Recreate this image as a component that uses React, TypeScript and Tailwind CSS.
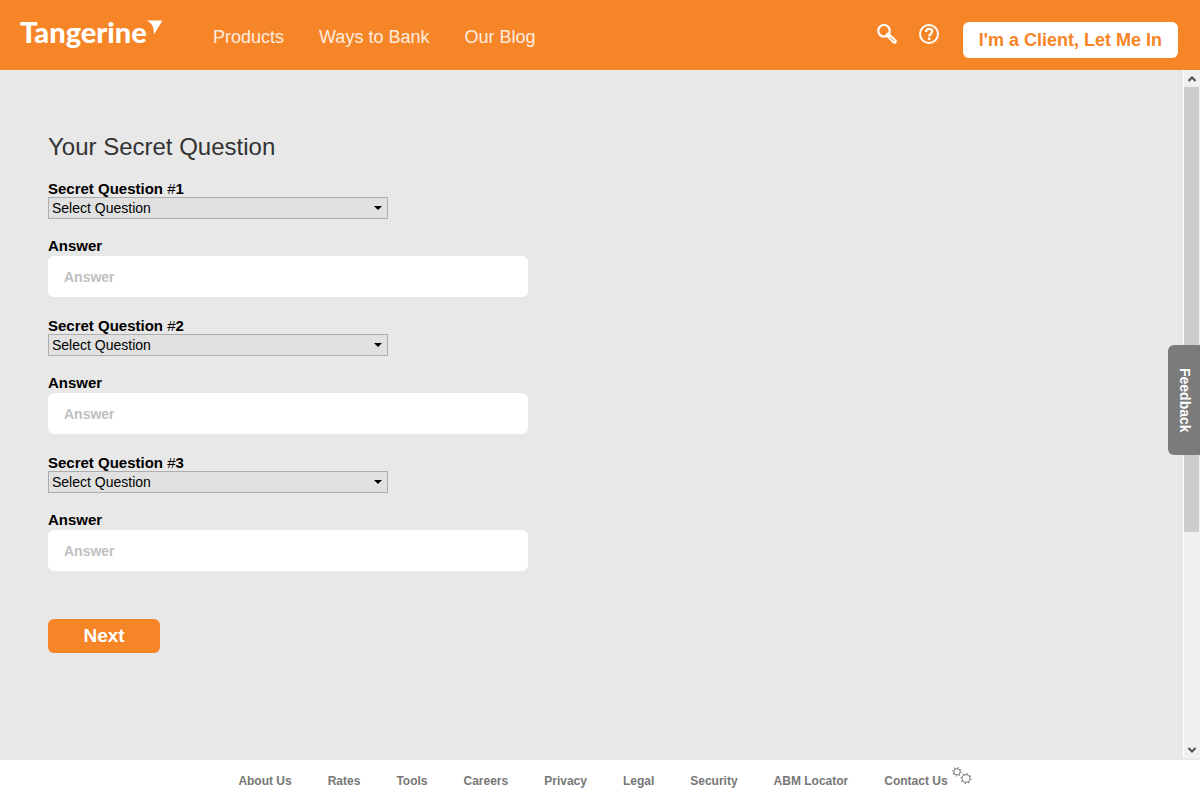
import React from "react";

const navLinks = ["Products", "Ways to Bank", "Our Blog"];
const footerLinks = ["About Us", "Rates", "Tools", "Careers", "Privacy", "Legal", "Security", "ABM Locator", "Contact Us"];

function Logo() {
  return (
    <a href="#" className="relative flex w-[213px] shrink-0 items-start pt-4 pl-5">
      <span className="font-[Lato,sans-serif] text-[29px] leading-8 font-black text-white">Tangerine</span>
      <svg width="17" height="15" viewBox="0 0 17 15" className="absolute top-5 left-[146px]" aria-hidden="true">
        <path d="M0 0.500H16.500L8 14.500C8 7 6 2.500 0 0.500Z" fill="#fff" />
      </svg>
    </a>
  );
}

function SearchIcon() {
  return (
    <svg width="20" height="20" viewBox="0 0 20 20" fill="none" stroke="#fff" aria-hidden="true">
      <circle cx="7" cy="6.800" r="5.800" strokeWidth="2.200" />
      <path d="M11 11L17.500 17.300" strokeWidth="4.600" strokeLinecap="round" />
      <path d="M13 13.200L17.300 17.300" stroke="#f68528" strokeWidth="1" />
    </svg>
  );
}

function HelpIcon() {
  return (
    <svg width="20" height="20" viewBox="0 0 20 20" fill="none" stroke="#fff" aria-hidden="true">
      <circle cx="10" cy="10" r="9" strokeWidth="2" />
      <path d="M7 8C7 3.800 13.200 3.800 13.200 7.600C13.200 9.800 10.200 9.800 10.200 12.400" strokeWidth="2.200" />
      <circle cx="10.200" cy="14.800" r="1.400" fill="#fff" stroke="none" />
    </svg>
  );
}

function Gears() {
  return (
    <svg width="20" height="18" viewBox="0 0 20 18" fill="none" stroke="#777" aria-hidden="true">
      <circle cx="5" cy="4.800" r="3.200" />
      <circle cx="5" cy="4.800" r="4.200" strokeWidth="1.200" strokeDasharray="1.100 2.199" />
      <circle cx="14" cy="11.500" r="4" />
      <circle cx="14" cy="11.500" r="5" strokeWidth="1.200" strokeDasharray="1.200 2.727" />
    </svg>
  );
}

function QuestionBlock({ n }: { n: number }) {
  return (
    <div className="mb-[21px]">
      <label htmlFor={`question-${n}`} className="block text-[15px] leading-4 font-bold">
        Secret Question <span className="font-normal">#</span>{n}
      </label>
      <div className="relative h-[22px] w-full max-w-[340px]">
        <select
          id={`question-${n}`}
          className="block h-full w-full appearance-none rounded-none border border-[#adadad] bg-[#e1e1e1] px-[3px] text-[14px] leading-5 text-black"
        >
          <option>Select Question</option>
        </select>
        <svg width="8" height="4" viewBox="0 0 8 4" className="pointer-events-none absolute top-[9px] right-[6px]" aria-hidden="true">
          <path d="M0 0H8L4 4Z" fill="#000" />
        </svg>
      </div>
      <label htmlFor={`answer-${n}`} className="mt-[19px] mb-0.5 block text-[15px] leading-4 font-bold">
        Answer
      </label>
      <input
        id={`answer-${n}`}
        type="text"
        placeholder="Answer"
        className="block h-[41px] w-full rounded-md bg-white px-4 text-[14px] font-bold text-black placeholder:text-[#c0c0c0]"
      />
    </div>
  );
}

export default function App() {
  return (
    <div className="flex h-screen flex-col bg-[#e8e8e8] font-['Liberation_Sans',Arial,sans-serif] text-black">
      <header className="flex h-[70px] shrink-0 items-start bg-[#f68528] pr-[22px]">
        <Logo />
        <nav className="flex gap-[35px] pt-[25px] text-lg leading-6 text-white/85">
          {navLinks.map((t) => (
            <a key={t} href="#">{t}</a>
          ))}
        </nav>
        <div className="ml-auto flex items-start pt-[22px]">
          <button type="button" aria-label="Search" className="mt-0.5 mr-[22px]"><SearchIcon /></button>
          <button type="button" aria-label="Help" className="mt-0.5 mr-6"><HelpIcon /></button>
          <button type="button" className="h-9 rounded-md bg-white px-4 text-lg font-bold text-[#f68528]">
            I'm a Client, Let Me In
          </button>
        </div>
      </header>

      <div className="flex min-h-0 flex-1">
        <main className="min-w-0 flex-1 overflow-hidden px-12 pt-[61px]">
          <form className="max-w-[480px]">
            <h1 className="mb-[18px] text-2xl leading-8 text-[#333]">Your Secret Question</h1>
            <QuestionBlock n={1} />
            <QuestionBlock n={2} />
            <QuestionBlock n={3} />
            <button type="button" className="mt-[27px] h-[34px] w-28 rounded-md bg-[#f68528] text-[19px] font-bold text-white">
              Next
            </button>
          </form>
        </main>
        <div className="mb-0.5 flex w-[17px] shrink-0 flex-col border-x border-l-white border-r-[#f0f0f0] bg-[#f0f0f0]" aria-hidden="true">
          <div className="flex h-[17px] items-center justify-center">
            <svg width="8" height="6" viewBox="0 0 8 6"><path d="M0.500 5L4 1.500L7.500 5" fill="none" stroke="#505050" strokeWidth="2" /></svg>
          </div>
          <div className="flex-1">
            <div className="h-[68%] bg-[#cdcdcd]" />
          </div>
          <div className="flex h-[17px] items-center justify-center">
            <svg width="8" height="6" viewBox="0 0 8 6"><path d="M0.500 1L4 4.500L7.500 1" fill="none" stroke="#505050" strokeWidth="2" /></svg>
          </div>
        </div>
      </div>

      <footer className="flex h-10 shrink-0 items-start justify-center bg-white pl-[10px] text-xs leading-4 font-bold text-[#777]">
        <nav className="flex gap-9 pt-[13px]">
          {footerLinks.map((t) => (
            <a key={t} href="#">{t}</a>
          ))}
        </nav>
        <div className="pt-[7px] pl-1"><Gears /></div>
      </footer>

      <button
        type="button"
        className="fixed top-1/2 right-0 flex h-[110px] w-8 -translate-y-1/2 items-center justify-center rounded-l-md bg-[#7b7b7b] text-[14px] font-bold text-white [writing-mode:vertical-rl]"
      >
        Feedback
      </button>
    </div>
  );
}
